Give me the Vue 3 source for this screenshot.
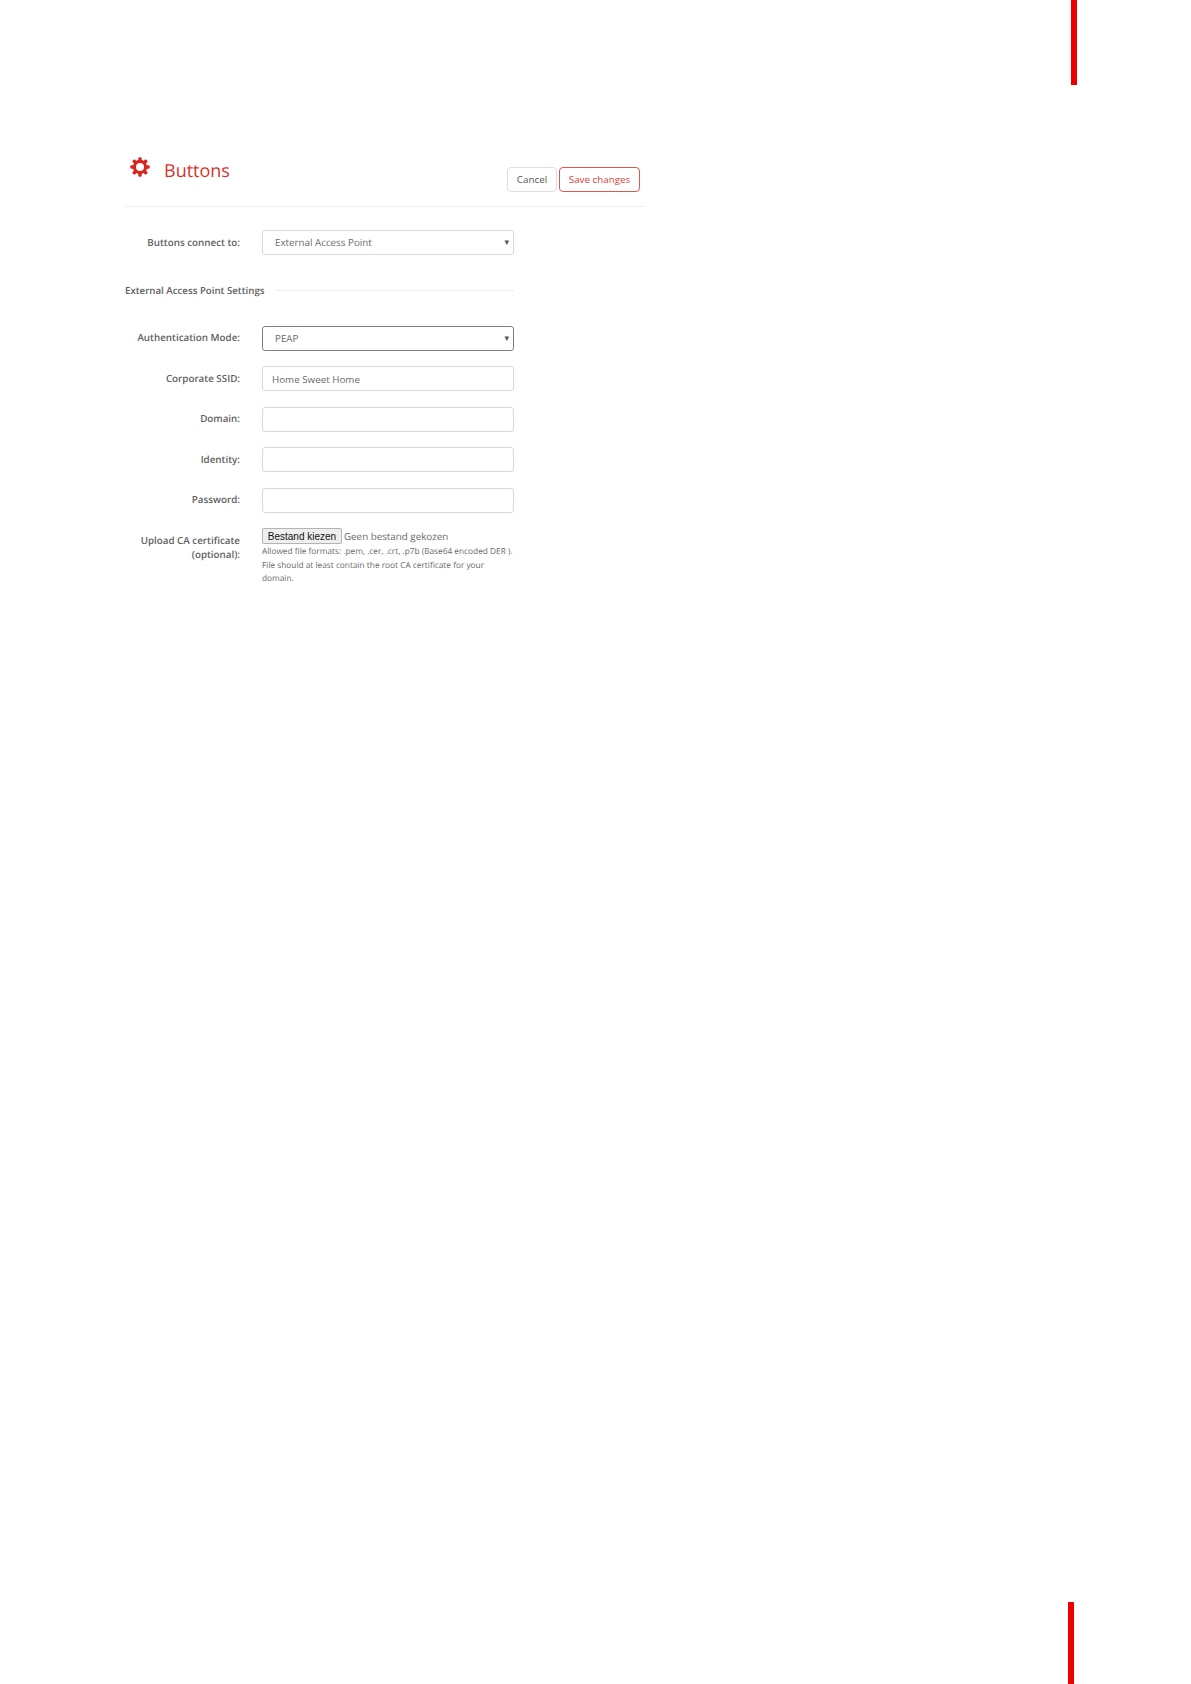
<script setup>
const teeth = [0, 45, 90, 135, 180, 225, 270, 315]
</script>

<template>
  <div class="page">
    <div class="mark mark-top"></div>
    <div class="mark mark-bottom"></div>
    <main class="panel">
      <header class="head">
        <div class="title">
          <svg class="gear" viewBox="0 0 20 20" width="20" height="20" aria-hidden="true">
            <circle cx="10" cy="10" r="5.6" fill="none" stroke="#d9251d" stroke-width="3.2" />
            <rect
              v-for="a in teeth"
              :key="a"
              x="8.3"
              y="0.3"
              width="3.4"
              height="4"
              rx="1.3"
              fill="#d9251d"
              :transform="`rotate(${a} 10 10)`"
            />
          </svg>
          <h1>Buttons</h1>
        </div>
        <div class="actions">
          <button class="btn cancel" type="button">Cancel</button>
          <button class="btn save" type="button">Save changes</button>
        </div>
      </header>

      <form class="form" @submit.prevent>
        <div class="row">
          <label>Buttons connect to:</label>
          <div class="select"><span>External Access Point</span><i>▾</i></div>
        </div>

        <div class="section">
          <span>External Access Point Settings</span>
          <b></b>
        </div>

        <div class="row">
          <label>Authentication Mode:</label>
          <div class="select focus"><span>PEAP</span><i>▾</i></div>
        </div>
        <div class="row">
          <label>Corporate SSID:</label>
          <input class="input" type="text" value="Home Sweet Home" />
        </div>
        <div class="row">
          <label>Domain:</label>
          <input class="input" type="text" />
        </div>
        <div class="row">
          <label>Identity:</label>
          <input class="input" type="text" />
        </div>
        <div class="row">
          <label>Password:</label>
          <input class="input" type="text" />
        </div>
        <div class="row upload">
          <label>Upload CA certificate<br />(optional):</label>
          <div class="file">
            <div class="file-line">
              <button class="file-btn" type="button">Bestand kiezen</button>
              <span>Geen bestand gekozen</span>
            </div>
            <p>Allowed file formats: .pem, .cer, .crt, .p7b (Base64 encoded DER ).<br />File should at least contain the root CA certificate for your<br />domain.</p>
          </div>
        </div>
      </form>
    </main>
  </div>
</template>

<style scoped>
.page {
  position: relative;
  height: 1684px;
  overflow: hidden;
  background: #fff;
  font-family: "Open Sans", sans-serif;
  color: #555;
  text-rendering: geometricPrecision;
}
.mark {
  position: absolute;
  width: 6px;
  background: #ee0000;
}
.mark-top {
  left: 1071px;
  top: 0;
  height: 85px;
}
.mark-bottom {
  left: 1068px;
  top: 1602px;
  height: 82px;
}
.panel {
  width: 520px;
  margin-left: 125px;
  padding-top: 157px;
}
.head {
  display: flex;
  justify-content: space-between;
  align-items: flex-start;
  height: 49px;
  border-bottom: 1px solid #eeeeee;
  padding: 0 5px 0 5px;
}
.title {
  display: flex;
  align-items: center;
  gap: 14px;
  height: 26px;
}
.gear {
  display: block;
  margin-top: -6px;
}
h1 {
  margin: 1px 0 0;
  font-size: 18px;
  font-weight: 400;
  line-height: 26px;
  color: #d8322b;
}
.actions {
  display: flex;
  gap: 2px;
  margin-top: 10px;
}
.btn {
  height: 25px;
  padding: 0;
  background: #fff;
  border-radius: 4px;
  font-family: inherit;
  font-size: 9.8px;
  line-height: 1;
}
.cancel {
  width: 50px;
  border: 1px solid #dedede;
  color: #555;
}
.save {
  width: 81px;
  border: 1px solid #e0574f;
  color: #d9433b;
}
.form {
  display: flex;
  flex-direction: column;
  padding-top: 23px;
  gap: 15.5px;
}
.row {
  display: grid;
  grid-template-columns: 115px 252px;
  column-gap: 22px;
  align-items: center;
}
.row label {
  text-align: right;
  font-size: 9.8px;
  font-weight: 600;
  line-height: 14px;
  color: #5f5f5f;
}
.select,
.input {
  box-sizing: border-box;
  height: 25px;
  width: 252px;
  border: 1px solid #d8d8d8;
  border-radius: 3px;
  background: #fff;
  font-family: inherit;
  font-size: 9.8px;
  color: #6a6a6a;
}
.select {
  position: relative;
  display: flex;
  align-items: center;
  padding-left: 12px;
}
.select i {
  position: absolute;
  right: 4px;
  top: 3px;
  font-style: normal;
  font-size: 9px;
  line-height: 16px;
  color: #555;
}
.focus {
  border-color: #808080;
}
.input {
  display: block;
  padding: 1px 9px 0;
  outline: none;
}
.section {
  display: flex;
  align-items: center;
  gap: 12px;
  width: 389px;
  height: 14px;
  margin: 13px 0 12.5px;
  font-size: 9.7px;
  font-weight: 600;
  color: #5f5f5f;
}
.section b {
  flex: 1;
  height: 1px;
  background: #eeeeee;
}
.upload {
  align-items: start;
}
.upload label {
  padding-top: 6px;
}
.file-line {
  display: flex;
  align-items: center;
  gap: 2px;
  height: 16px;
  font-size: 9.8px;
  color: #6a6a6a;
}
.file-btn {
  box-sizing: border-box;
  width: 80px;
  height: 16px;
  padding: 0;
  border: 1px solid #b4b4b4;
  border-radius: 2px;
  background: #efefef;
  font-family: "Liberation Sans", sans-serif;
  font-size: 10px;
  color: #111;
}
.file p {
  margin: 1px 0 0;
  font-size: 8.3px;
  line-height: 13.5px;
  color: #6a6a6a;
  white-space: nowrap;
}
</style>
